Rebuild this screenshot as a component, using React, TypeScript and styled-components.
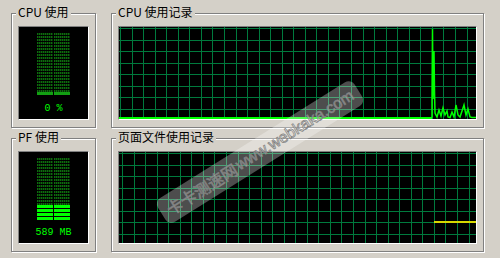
import styled, { createGlobalStyle } from "styled-components";

const GlobalStyle = createGlobalStyle`
  html, body {
    margin: 0;
    padding: 0;
    background: #d4d0c8;
  }
`;

const Page = styled.div`
  position: relative;
  width: 500px;
  height: 258px;
  overflow: hidden;
  box-sizing: border-box;
  padding: 13px 16px 6px 11px;
  display: grid;
  grid-template-columns: 85px 1fr;
  grid-template-rows: 115px 114px;
  column-gap: 15px;
  row-gap: 10px;
  background: #d4d0c8;
  font-family: "Noto Sans CJK SC", sans-serif;
`;

const Group = styled.div`
  position: relative;
  display: flex;
  min-width: 0;
  box-sizing: border-box;
  border: 1px solid #808080;
  box-shadow: inset 1px 1px 0 #fff, 1px 1px 0 #fff;
  padding: 12px 6px 7px 6px;
`;

const Legend = styled.span`
  position: absolute;
  top: -9px;
  left: 4px;
  padding: 0 2px;
  background: #d4d0c8;
  color: #000;
  font-size: 12px;
  line-height: 14px;
  white-space: nowrap;
`;

const Screen = styled.div`
  flex: 1;
  min-width: 0;
  background: #000;
  border: 1px solid;
  border-color: #808080 #fff #fff #808080;
  overflow: hidden;
`;

const UsageScreen = styled(Screen)`
  display: flex;
  flex-direction: column;
  align-items: center;
  justify-content: space-between;
  padding: 6px 0 4px;
`;

const Meter = styled.div`
  display: flex;
  gap: 1px;
`;

const MeterColumn = styled.div`
  width: 16px;
  height: 62px;
  display: flex;
  flex-direction: column;
  justify-content: flex-end;
  background:
    repeating-linear-gradient(to right, transparent 0 1px, rgba(0, 0, 0, 0.55) 1px 2px),
    repeating-linear-gradient(to top, #0d6b0d 0 2px, #000 2px 3px);
`;

const MeterFill = styled.div<{ $color: string }>`
  background: repeating-linear-gradient(
    to top,
    ${(p) => p.$color} 0 3px,
    #000 3px 4px
  );
`;

const Readout = styled.div`
  color: #00ff00;
  font-family: "Liberation Mono", monospace;
  font-size: 10px;
  line-height: 12px;
  white-space: pre;
`;

const GraphSvg = styled.svg`
  display: block;
  width: 100%;
  height: 100%;
`;

const Watermark = styled.div`
  position: absolute;
  left: 144px;
  top: 138px;
  width: 232px;
  height: 28px;
  display: flex;
  align-items: center;
  justify-content: center;
  gap: 2px;
  border-radius: 7px;
  background: rgba(255, 255, 255, 0.3);
  transform: rotate(-32deg);
  pointer-events: none;
`;

const MarkText = styled.span<{ $latin?: boolean }>`
  font-family: ${(p) =>
    p.$latin ? '"Liberation Sans", sans-serif' : '"Noto Sans CJK SC", sans-serif'};
  font-size: 16px;
  line-height: 20px;
  color: rgba(255, 255, 255, 0.4);
  -webkit-text-stroke: 0.7px #7c7c7c;
  white-space: nowrap;
`;

function UsageMeter({ fill, color, label }: { fill: number; color: string; label: string }) {
  const h = Math.round(62 * fill);
  return (
    <UsageScreen>
      <Meter>
        <MeterColumn>
          <MeterFill $color={color} style={{ height: h }} />
        </MeterColumn>
        <MeterColumn>
          <MeterFill $color={color} style={{ height: h }} />
        </MeterColumn>
      </Meter>
      <Readout>{label}</Readout>
    </UsageScreen>
  );
}

function Graph({
  offsetX,
  offsetY,
  children,
}: {
  offsetX: number;
  offsetY: number;
  children?: React.ReactNode;
}) {
  const step = 11.55;
  const xs = Array.from({ length: 34 }, (_, i) => Math.round(offsetX + i * step) + 0.5);
  const ys = Array.from({ length: 9 }, (_, i) => Math.round(offsetY + i * step) + 0.5);
  return (
    <Screen>
      <GraphSvg>
        {xs.map((x) => (
          <line key={"v" + x} x1={x} x2={x} y1={0} y2="100%" stroke="#007a3d" strokeWidth={1} />
        ))}
        {ys.map((y) => (
          <line key={"h" + y} y1={y} y2={y} x1={0} x2="100%" stroke="#007a3d" strokeWidth={1} />
        ))}
        <svg x="100%" y="100%" overflow="visible">
          {children}
        </svg>
      </GraphSvg>
    </Screen>
  );
}

// cpu history, relative to the bottom right corner of the graph
const cpuPath =
  "M -44 -1.5 L -44 -20 L -43.5 -90 L -43 -20 L -42 -68 L -41.5 -28 L -41 -6 L -39 -2 " +
  "L -37 -9 L -35 -3 L -33 -11 L -31 -4 L -29 -8 L -28 -2 L -26 -1.5 L -24 -7 L -22 -2 L -20 -14 " +
  "L -18 -4 L -16 -2 L -14 -8 L -12 -14 L -10 -4 L -8 -10 L -6 -2 L -4 -1.5 L 0 -1.5";

export default function App() {
  return (
    <>
      <GlobalStyle />
      <Page>
        <Group>
          <Legend>CPU 使用</Legend>
          <UsageMeter fill={3 / 62} color="#12a012" label="0 %" />
        </Group>
        <Group>
          <Legend>CPU 使用记录</Legend>
          <Graph offsetX={1} offsetY={1}>
            <path d={cpuPath} fill="none" stroke="#00ff00" strokeWidth={1.5} />
            <line x1={-400} x2={-44} y1={-1} y2={-1} stroke="#00ff00" strokeWidth={2} />
          </Graph>
        </Group>
        <Group>
          <Legend>PF 使用</Legend>
          <UsageMeter fill={15 / 62} color="#00ff00" label="589 MB" />
        </Group>
        <Group>
          <Legend>页面文件使用记录</Legend>
          <Graph offsetX={3} offsetY={1}>
            <line x1={-42} x2={0} y1={-21} y2={-21} stroke="#d8d800" strokeWidth={2} />
          </Graph>
        </Group>
        <Watermark>
          <MarkText>卡卡测速网</MarkText>
          <MarkText $latin>www.webkaka.com</MarkText>
        </Watermark>
      </Page>
    </>
  );
}
